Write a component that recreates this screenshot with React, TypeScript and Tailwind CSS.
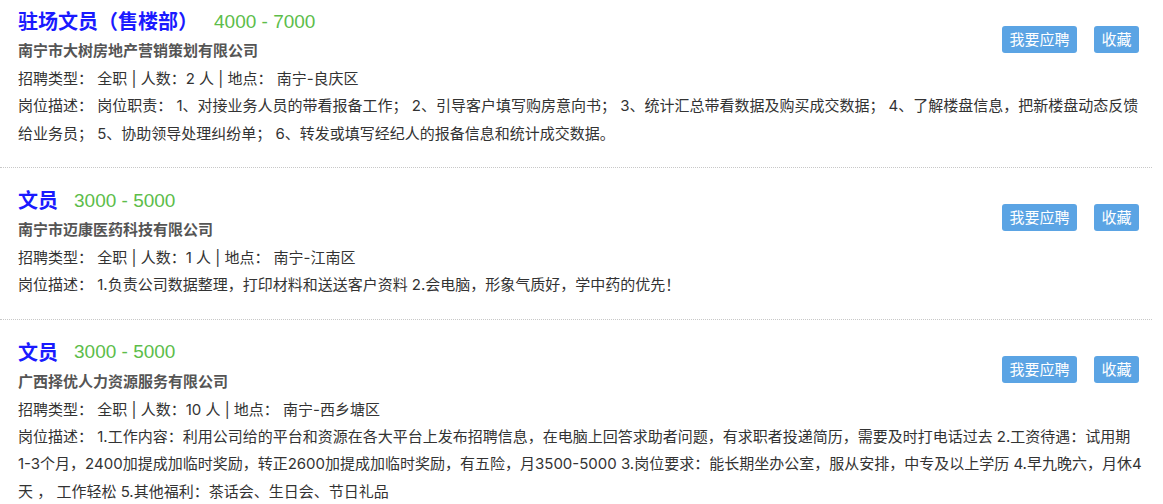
import React from 'react';

interface Job {
  title: string;
  salary: string;
  company: string;
  count: number;
  location: string;
  desc: string;
}

const jobs: Job[] = [
  {
    title: '驻场文员（售楼部）',
    salary: '4000 - 7000',
    company: '南宁市大树房地产营销策划有限公司',
    count: 2,
    location: '南宁-良庆区',
    desc: '岗位职责： 1、对接业务人员的带看报备工作； 2、引导客户填写购房意向书； 3、统计汇总带看数据及购买成交数据； 4、了解楼盘信息，把新楼盘动态反馈给业务员； 5、协助领导处理纠纷单； 6、转发或填写经纪人的报备信息和统计成交数据。',
  },
  {
    title: '文员',
    salary: '3000 - 5000',
    company: '南宁市迈康医药科技有限公司',
    count: 1,
    location: '南宁-江南区',
    desc: '1.负责公司数据整理，打印材料和送送客户资料 2.会电脑，形象气质好，学中药的优先！',
  },
  {
    title: '文员',
    salary: '3000 - 5000',
    company: '广西择优人力资源服务有限公司',
    count: 10,
    location: '南宁-西乡塘区',
    desc: '1.工作内容：利用公司给的平台和资源在各大平台上发布招聘信息，在电脑上回答求助者问题，有求职者投递简历，需要及时打电话过去 2.工资待遇：试用期1-3个月，2400加提成加临时奖励，转正2600加提成加临时奖励，有五险，月3500-5000 3.岗位要求：能长期坐办公室，服从安排，中专及以上学历 4.早九晚六，月休4天 ， 工作轻松 5.其他福利：茶话会、生日会、节日礼品',
  },
];

const JobCard = ({ job, first }: { job: Job; first?: boolean }) => (
  <div className={`relative border-b border-dotted border-[#c8c8c8] pl-[18px] pr-[10px] pb-[20px] ${first ? 'pt-[8px]' : 'pt-[19px]'}`}>
    <div className="flex items-center h-[28px]">
      <span className="text-[20px] font-bold text-[#1a1aff]">{job.title}</span>
      <span className="ml-[16px] text-[19px] text-[#5cbd4a] font-['Liberation_Sans','Noto_Sans_CJK_SC',sans-serif]">{job.salary}</span>
    </div>
    <div className={`absolute right-[13px] flex gap-[17px] ${first ? 'top-[26px]' : 'top-[36px]'}`}>
      <button className="w-[75px] h-[27px] rounded-[3px] bg-[#5ba4e4] text-white text-[15px] leading-[27px]">我要应聘</button>
      <button className="w-[45px] h-[27px] rounded-[3px] bg-[#5ba4e4] text-white text-[15px] leading-[27px]">收藏</button>
    </div>
    <div className="h-[29px] leading-[29px] text-[15px] font-bold text-[#555]">{job.company}</div>
    <div className="h-[27px] leading-[27px] text-[15px] text-[#333]">
      {`招聘类型： 全职 | 人数：${job.count} 人 | 地点： ${job.location}`}
    </div>
    <div className="leading-[27.5px] text-[15px] text-[#333]">{`岗位描述： ${job.desc}`}</div>
  </div>
);

export default function App() {
  return (
    <div className="w-[1163px] h-[504px] overflow-hidden bg-white font-['Inter','Noto_Sans_CJK_SC',sans-serif]">
      <div className="w-[1152px]">
        {jobs.map((job, i) => (
          <JobCard key={i} job={job} first={i === 0} />
        ))}
      </div>
    </div>
  );
}
